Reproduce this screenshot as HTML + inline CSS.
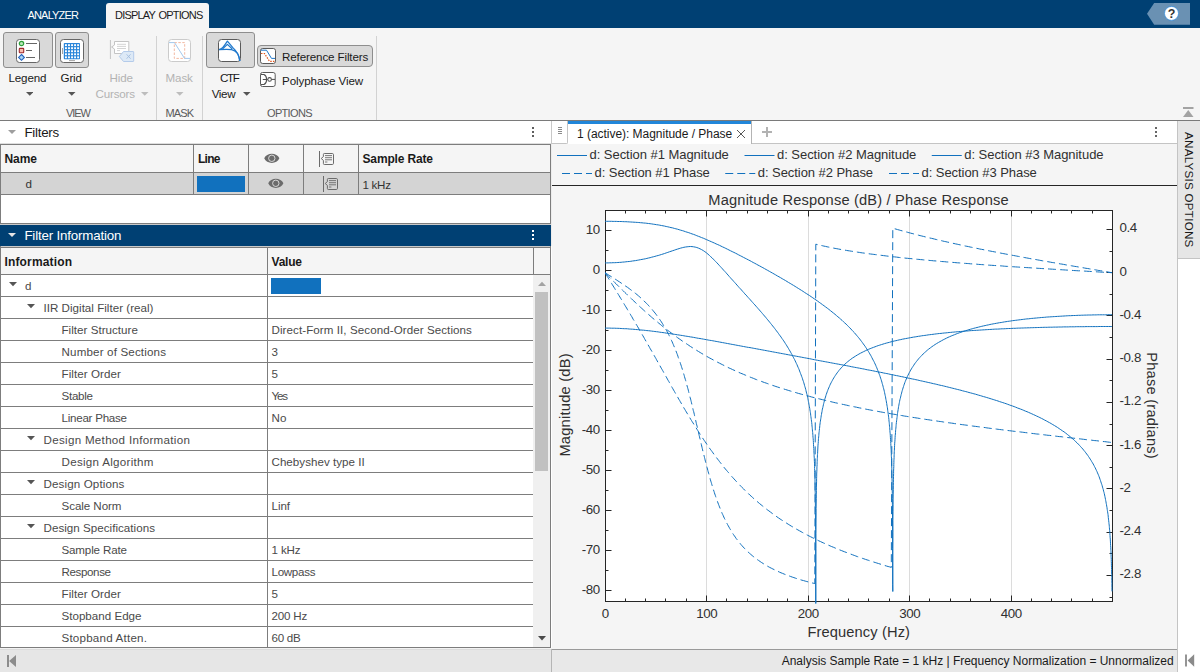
<!DOCTYPE html>
<html><head><meta charset="utf-8"><title>Filter Analyzer</title>
<style>
html,body{margin:0;padding:0;}
body{width:1200px;height:672px;position:relative;overflow:hidden;background:#f5f5f5;font-family:"Liberation Sans", sans-serif;}
body>div,body>svg{position:absolute;}
.t{font-family:"Liberation Sans", sans-serif;}
</style></head><body>
<div style="left:0px;top:0px;width:1200px;height:28px;background:#004073;"></div>
<div style="left:106px;top:3px;width:103px;height:26px;background:#f5f5f5;border-radius:3px 3px 0 0;"></div>
<div class="t" style="left:27.50px;top:8.00px;font-size:11px;line-height:14px;color:#ffffff;letter-spacing:-0.830px;white-space:nowrap;">ANALYZER</div>
<div class="t" style="left:115.00px;top:8.00px;font-size:11px;line-height:14px;color:#1a1a1a;letter-spacing:-0.794px;white-space:nowrap;word-spacing:1.4px;">DISPLAY OPTIONS</div>
<svg style="left:1140px;top:0;" width="60" height="28" viewBox="0 0 60 28"><path d="M7 13.8 L14.2 3 H50 V24.7 H14.2 Z" fill="#6a91b3"/><circle cx="31.5" cy="13.4" r="7" fill="#fff" stroke="#2a8ae0" stroke-width="0.7"/></svg>
<div class="t" style="left:1161.5px;top:6px;width:20px;text-align:center;font-size:12.5px;line-height:16px;font-weight:bold;color:#333;">?</div>
<div style="left:0px;top:28px;width:1200px;height:92px;background:#f5f5f5;"></div>
<div style="left:0px;top:120px;width:1200px;height:1px;background:#7a7a7a;"></div>
<div style="left:156px;top:36px;width:1px;height:84px;background:#d2d2d2;"></div>
<div style="left:202px;top:36px;width:1px;height:84px;background:#d2d2d2;"></div>
<div style="left:376px;top:36px;width:1px;height:84px;background:#d2d2d2;"></div>
<div style="left:3px;top:32px;width:50px;height:36px;background:#d9d9d9;border:1px solid #8e8e8e;border-radius:3px;box-sizing:border-box;"></div>
<div style="left:55px;top:32px;width:34px;height:36px;background:#d9d9d9;border:1px solid #8e8e8e;border-radius:3px;box-sizing:border-box;"></div>
<div style="left:206px;top:32px;width:49px;height:36px;background:#d9d9d9;border:1px solid #8e8e8e;border-radius:3px;box-sizing:border-box;"></div>
<div style="left:257px;top:45px;width:116px;height:22px;background:#d9d9d9;border:1px solid #8e8e8e;border-radius:4px;box-sizing:border-box;"></div>
<div class="t" style="left:8.50px;top:71.00px;font-size:11.6px;line-height:14px;color:#1a1a1a;letter-spacing:-0.149px;white-space:nowrap;">Legend</div>
<div class="t" style="left:60.50px;top:71.00px;font-size:11.6px;line-height:14px;color:#1a1a1a;letter-spacing:-0.141px;white-space:nowrap;">Grid</div>
<div class="t" style="left:109.50px;top:71.00px;font-size:11.6px;line-height:14px;color:#b3b3b3;letter-spacing:-0.132px;white-space:nowrap;">Hide</div>
<div class="t" style="left:95.50px;top:87.00px;font-size:11.6px;line-height:14px;color:#b3b3b3;letter-spacing:-0.183px;white-space:nowrap;">Cursors</div>
<div class="t" style="left:165.50px;top:71.00px;font-size:11.6px;line-height:14px;color:#b3b3b3;letter-spacing:-0.113px;white-space:nowrap;">Mask</div>
<div class="t" style="left:220.00px;top:71.00px;font-size:11.6px;line-height:14px;color:#1a1a1a;letter-spacing:-1.402px;white-space:nowrap;">CTF</div>
<div class="t" style="left:211.70px;top:87.00px;font-size:11.6px;line-height:14px;color:#1a1a1a;letter-spacing:-0.352px;white-space:nowrap;">View</div>
<div class="t" style="left:282.00px;top:50.00px;font-size:11.6px;line-height:14px;color:#1a1a1a;letter-spacing:-0.124px;white-space:nowrap;">Reference Filters</div>
<div class="t" style="left:282.00px;top:74.00px;font-size:11.6px;line-height:14px;color:#1a1a1a;letter-spacing:-0.082px;white-space:nowrap;">Polyphase View</div>
<div class="t" style="left:66.00px;top:106.00px;font-size:11px;line-height:14px;color:#5a5a5a;letter-spacing:-1.053px;white-space:nowrap;">VIEW</div>
<div class="t" style="left:165.50px;top:106.00px;font-size:11px;line-height:14px;color:#5a5a5a;letter-spacing:-0.877px;white-space:nowrap;">MASK</div>
<div class="t" style="left:267.00px;top:106.00px;font-size:11px;line-height:14px;color:#5a5a5a;letter-spacing:-0.667px;white-space:nowrap;">OPTIONS</div>
<svg style="left:25.5px;top:92.3px;" width="7.5" height="3.8" viewBox="0 0 7.5 3.8"><path d="M0 0 H7.5 L3.75 3.8 Z" fill="#555"/></svg>
<svg style="left:68.2px;top:92.3px;" width="7.5" height="3.8" viewBox="0 0 7.5 3.8"><path d="M0 0 H7.5 L3.75 3.8 Z" fill="#555"/></svg>
<svg style="left:141px;top:92.3px;" width="7.5" height="3.8" viewBox="0 0 7.5 3.8"><path d="M0 0 H7.5 L3.75 3.8 Z" fill="#bdbdbd"/></svg>
<svg style="left:176.2px;top:92.3px;" width="7.5" height="3.8" viewBox="0 0 7.5 3.8"><path d="M0 0 H7.5 L3.75 3.8 Z" fill="#bdbdbd"/></svg>
<svg style="left:243.3px;top:92.3px;" width="7.5" height="3.8" viewBox="0 0 7.5 3.8"><path d="M0 0 H7.5 L3.75 3.8 Z" fill="#555"/></svg>
<svg style="left:16px;top:39px;" width="24" height="24" viewBox="0 0 24 24"><rect x="0.5" y="0.5" width="23" height="23" rx="3" fill="#fff" stroke="#666"/><circle cx="5.5" cy="4.5" r="2.2" fill="#b9e8b9" stroke="#2e9e3a" stroke-width="1.2"/><rect x="3.3" y="9.4" width="4.4" height="4.4" rx="0.6" fill="#f7bfb0" stroke="#a12a2e" stroke-width="1.1"/><path d="M5.5 15.5 L8.4 18.4 L5.5 21.3 L2.6 18.4 Z" fill="#a9d6f5" stroke="#2160bd" stroke-width="1.1"/><path d="M10 4.5 H21 M10 11.5 H16 M10 18.5 H19" stroke="#666" stroke-width="1"/></svg>
<svg style="left:60px;top:39px;" width="24" height="24" viewBox="0 0 24 24"><rect x="0.5" y="0.5" width="23" height="23" rx="3" fill="#fff" stroke="#666"/><rect x="3.8" y="4" width="16.2" height="16.2" rx="0.8" fill="#2a86da"/><rect x="5.00" y="5.20" width="1.9" height="1.9" fill="#fff"/><rect x="5.00" y="8.24" width="1.9" height="1.9" fill="#fff"/><rect x="5.00" y="11.28" width="1.9" height="1.9" fill="#fff"/><rect x="5.00" y="14.32" width="1.9" height="1.9" fill="#fff"/><rect x="5.00" y="17.36" width="1.9" height="1.9" fill="#fff"/><rect x="8.04" y="5.20" width="1.9" height="1.9" fill="#fff"/><rect x="8.04" y="8.24" width="1.9" height="1.9" fill="#fff"/><rect x="8.04" y="11.28" width="1.9" height="1.9" fill="#fff"/><rect x="8.04" y="14.32" width="1.9" height="1.9" fill="#fff"/><rect x="8.04" y="17.36" width="1.9" height="1.9" fill="#fff"/><rect x="11.08" y="5.20" width="1.9" height="1.9" fill="#fff"/><rect x="11.08" y="8.24" width="1.9" height="1.9" fill="#fff"/><rect x="11.08" y="11.28" width="1.9" height="1.9" fill="#fff"/><rect x="11.08" y="14.32" width="1.9" height="1.9" fill="#fff"/><rect x="11.08" y="17.36" width="1.9" height="1.9" fill="#fff"/><rect x="14.12" y="5.20" width="1.9" height="1.9" fill="#fff"/><rect x="14.12" y="8.24" width="1.9" height="1.9" fill="#fff"/><rect x="14.12" y="11.28" width="1.9" height="1.9" fill="#fff"/><rect x="14.12" y="14.32" width="1.9" height="1.9" fill="#fff"/><rect x="14.12" y="17.36" width="1.9" height="1.9" fill="#fff"/><rect x="17.16" y="5.20" width="1.9" height="1.9" fill="#fff"/><rect x="17.16" y="8.24" width="1.9" height="1.9" fill="#fff"/><rect x="17.16" y="11.28" width="1.9" height="1.9" fill="#fff"/><rect x="17.16" y="14.32" width="1.9" height="1.9" fill="#fff"/><rect x="17.16" y="17.36" width="1.9" height="1.9" fill="#fff"/><path d="M2.5 9 V15" stroke="#9a9a9a" stroke-width="0.9"/><path d="M9 21.6 H15" stroke="#9a9a9a" stroke-width="0.9"/></svg>
<svg style="left:108px;top:39px;" width="28" height="24" viewBox="0 0 28 24"><path d="M2.4 1 V20" stroke="#c4c4c4" stroke-width="1"/><path d="M6.5 2.5 H20.8 V14.5 H6.5 V10 L3.6 8 L6.5 6 Z" fill="#fff" stroke="#c4c4c4" stroke-width="1"/><path d="M9 5.3 H18 M9 7.4 H18 M9 9.5 H18 M9 11.6 H12" stroke="#cfcfcf" stroke-width="0.9"/><path d="M11.4 17.5 L15.5 12.5 H25.2 Q25.7 12.5 25.7 13 V22 Q25.7 22.5 25.2 22.5 H15.5 Z" fill="#dde9f6" stroke="#b4cbea" stroke-width="1"/><path d="M18.6 15.3 L22.6 19.7 M22.6 15.3 L18.6 19.7" stroke="#a3bde0" stroke-width="0.9"/></svg>
<svg style="left:168px;top:39px;" width="23" height="23" viewBox="0 0 23 23"><rect x="0.5" y="0.5" width="22" height="22" rx="3" fill="#fff" stroke="#cbcbcb"/><rect x="6.3" y="3.6" width="10.4" height="15.8" fill="none" stroke="#f2b9a3" stroke-width="1" stroke-dasharray="2.5 1.5"/><path d="M1 3.6 H6.5 L16.5 19.4 H22" fill="none" stroke="#a3c8ec" stroke-width="1"/></svg>
<svg style="left:218px;top:39px;" width="23" height="23" viewBox="0 0 23 23"><rect x="0.5" y="0.5" width="22" height="22" rx="3" fill="#fff" stroke="#5a5a5a"/><g fill="none" stroke="#1f78cc" stroke-width="1.25" stroke-linejoin="round"><path d="M1 10.6 C4 10.2 5.5 8 9.4 2.2 L14.6 8.4 C18 11.5 21 15 21.8 22"/><path d="M1 10.6 C7 10.3 11 10.3 13.5 10.6 C18.5 11.5 21.2 16 21.8 22"/><path d="M4.4 10 L9.4 5.4 L14.3 10"/></g></svg>
<svg style="left:260px;top:48px;" width="16" height="16" viewBox="0 0 16 16"><rect x="0.5" y="0.5" width="15" height="15" rx="2.2" fill="#fff" stroke="#5a5a5a"/><path d="M1 2.2 H6.5 L11.5 10.4 H15" fill="none" stroke="#1f78cc" stroke-width="1"/><path d="M1 5.5 H4.5 L9.5 13.3 H14.5" fill="none" stroke="#e0541b" stroke-width="1.15" stroke-dasharray="1.5 1.2"/></svg>
<svg style="left:260px;top:72px;" width="16" height="15" viewBox="0 0 16 15"><rect x="0.5" y="0.5" width="14.7" height="14" rx="2" fill="#fff" stroke="#5a5a5a"/><g fill="none" stroke="#505050" stroke-width="1.05"><path d="M1 2.4 H4 Q6.6 3.6 6.6 7.4 Q6.6 11.2 4 12.4 H1 M2.8 7.4 H7.8"/><circle cx="9.6" cy="7.4" r="1.8"/><path d="M11.4 7.4 H15"/></g></svg>
<div style="left:0px;top:121px;width:551px;height:24px;background:#fff;"></div>
<svg style="left:8px;top:130px;" width="9" height="5" viewBox="0 0 9 5"><path d="M0 0 H8 L4 4 Z" fill="#9e9e9e"/></svg>
<div class="t" style="left:24.50px;top:124.00px;font-size:13.33px;line-height:17px;color:#1a1a1a;letter-spacing:-0.276px;white-space:nowrap;">Filters</div>
<div style="left:532px;top:127px;width:2px;height:2px;background:#5e5e5e;"></div>
<div style="left:532px;top:131px;width:2px;height:2px;background:#5e5e5e;"></div>
<div style="left:532px;top:135px;width:2px;height:2px;background:#5e5e5e;"></div>
<div style="left:0px;top:144px;width:552px;height:81px;background:#fff;"></div>
<div style="left:0px;top:143px;width:551px;height:1px;background:#dedede;"></div>
<div style="left:0px;top:144px;width:551px;height:1px;background:#7d7d7d;"></div>
<div style="left:1px;top:145px;width:550px;height:27px;background:#f5f5f5;"></div>
<div style="left:0px;top:172px;width:551px;height:1px;background:#7d7d7d;"></div>
<div style="left:1px;top:173px;width:550px;height:21px;background:#d4d4d4;"></div>
<div style="left:0px;top:194px;width:551px;height:1px;background:#7d7d7d;"></div>
<div style="left:0px;top:144px;width:1px;height:81px;background:#7d7d7d;"></div>
<div style="left:550px;top:144px;width:1px;height:80px;background:#7d7d7d;"></div>
<div style="left:551px;top:121px;width:1px;height:23px;background:#c8c8c8;"></div>
<div style="left:551px;top:144px;width:1px;height:505px;background:#ececec;"></div>
<div style="left:0px;top:223px;width:551px;height:1px;background:#7d7d7d;"></div>
<div style="left:0px;top:224px;width:551px;height:1px;background:#c9c9c9;"></div>
<div style="left:193px;top:145px;width:1px;height:49px;background:#7d7d7d;"></div>
<div style="left:248px;top:145px;width:1px;height:49px;background:#7d7d7d;"></div>
<div style="left:303px;top:145px;width:1px;height:49px;background:#7d7d7d;"></div>
<div style="left:358px;top:145px;width:1px;height:49px;background:#7d7d7d;"></div>
<div class="t" style="left:4.50px;top:151.00px;font-size:12px;line-height:16px;color:#1a1a1a;letter-spacing:-0.047px;white-space:nowrap;font-weight:bold;">Name</div>
<div class="t" style="left:198.00px;top:151.00px;font-size:12px;line-height:16px;color:#1a1a1a;letter-spacing:-0.740px;white-space:nowrap;font-weight:bold;">Line</div>
<div class="t" style="left:362.50px;top:151.00px;font-size:12px;line-height:16px;color:#1a1a1a;letter-spacing:-0.150px;white-space:nowrap;font-weight:bold;">Sample Rate</div>
<div class="t" style="left:25.50px;top:177.00px;font-size:11.6px;line-height:14px;color:#333;letter-spacing:0.000px;white-space:nowrap;">d</div>
<div class="t" style="left:362.50px;top:178.00px;font-size:11.6px;line-height:14px;color:#333;letter-spacing:-0.299px;white-space:nowrap;">1 kHz</div>
<div style="left:197px;top:176px;width:48px;height:16px;background:#1171BE;"></div>
<svg style="left:264px;top:153px;" width="16" height="11" viewBox="0 0 16 11"><path d="M0.2 5.3 C2.6 -0.9 13 -0.9 15.4 5.3 C13 11.5 2.6 11.5 0.2 5.3 Z" fill="#6b6b6b"/><circle cx="7.8" cy="5.3" r="3.2" fill="none" stroke="#f0f0f0" stroke-width="0.8"/></svg>
<svg style="left:268px;top:178px;" width="16" height="11" viewBox="0 0 16 11"><path d="M0.2 5.3 C2.6 -0.9 13 -0.9 15.4 5.3 C13 11.5 2.6 11.5 0.2 5.3 Z" fill="#6b6b6b"/><circle cx="7.8" cy="5.3" r="3.2" fill="none" stroke="#f0f0f0" stroke-width="0.8"/></svg>
<svg style="left:318px;top:151px;" width="17" height="17" viewBox="0 0 17 17"><g fill="none" stroke="#6b6b6b"><path d="M1.5 0 V16" stroke-width="1"/><path d="M6.3 2.5 H14.3 Q15.5 2.5 15.5 3.7 V12.3 Q15.5 13.5 14.3 13.5 H6.3 Q5.4 13.5 5.4 12.6 V9.4 L3.2 7.5 L5.4 5.6 V3.4 Q5.4 2.5 6.3 2.5 Z" stroke-width="1"/><path d="M7 4.6 H14 M7 6.7 H14 M7 8.8 H14 M7 11 H9.4" stroke-width="0.9"/></g></svg>
<svg style="left:322px;top:176px;" width="17" height="17" viewBox="0 0 17 17"><g fill="none" stroke="#6b6b6b"><path d="M1.5 0 V16" stroke-width="1"/><path d="M6.3 2.5 H14.3 Q15.5 2.5 15.5 3.7 V12.3 Q15.5 13.5 14.3 13.5 H6.3 Q5.4 13.5 5.4 12.6 V9.4 L3.2 7.5 L5.4 5.6 V3.4 Q5.4 2.5 6.3 2.5 Z" stroke-width="1"/><path d="M7 4.6 H14 M7 6.7 H14 M7 8.8 H14 M7 11 H9.4" stroke-width="0.9"/></g></svg>
<div style="left:0px;top:225px;width:551px;height:21px;background:#004073;"></div>
<svg style="left:8px;top:233px;" width="9" height="5" viewBox="0 0 9 5"><path d="M0 0 H8 L4 4 Z" fill="#e6e6e6"/></svg>
<div class="t" style="left:24.40px;top:227.00px;font-size:13.33px;line-height:17px;color:#ffffff;letter-spacing:-0.175px;white-space:nowrap;">Filter Information</div>
<div style="left:532px;top:230px;width:2px;height:2px;background:#ffffff;"></div>
<div style="left:532px;top:234px;width:2px;height:2px;background:#ffffff;"></div>
<div style="left:532px;top:238px;width:2px;height:2px;background:#ffffff;"></div>
<div style="left:0px;top:246px;width:552px;height:402px;background:#fff;"></div>
<div style="left:0px;top:246px;width:551px;height:1px;background:#c9c9c9;"></div>
<div style="left:0px;top:247px;width:551px;height:1px;background:#7d7d7d;"></div>
<div style="left:1px;top:248px;width:550px;height:26px;background:#f5f5f5;"></div>
<div style="left:0px;top:246px;width:1px;height:402px;background:#7d7d7d;"></div>
<div style="left:550px;top:246px;width:1px;height:402px;background:#7d7d7d;"></div>
<div style="left:0px;top:647px;width:551px;height:1px;background:#7d7d7d;"></div>
<div style="left:533px;top:248px;width:1px;height:26px;background:#7d7d7d;"></div>
<div style="left:533px;top:275px;width:17px;height:372px;background:#f0f0f0;"></div>
<div style="left:535px;top:292px;width:13px;height:179px;background:#c1c1c1;"></div>
<svg style="left:538px;top:281px;" width="8" height="5" viewBox="0 0 8 5"><path d="M0 5 H8 L4 0.8 Z" fill="#a3a3a3"/></svg>
<svg style="left:538px;top:636px;" width="8" height="5" viewBox="0 0 8 5"><path d="M0 0 H8 L4 4.5 Z" fill="#4a4a4a"/></svg>
<div style="left:0px;top:274px;width:551px;height:1px;background:#7d7d7d;"></div>
<div style="left:0px;top:296px;width:533px;height:1px;background:#7d7d7d;"></div>
<div style="left:0px;top:318px;width:533px;height:1px;background:#7d7d7d;"></div>
<div style="left:0px;top:340px;width:533px;height:1px;background:#7d7d7d;"></div>
<div style="left:0px;top:362px;width:533px;height:1px;background:#7d7d7d;"></div>
<div style="left:0px;top:384px;width:533px;height:1px;background:#7d7d7d;"></div>
<div style="left:0px;top:406px;width:533px;height:1px;background:#7d7d7d;"></div>
<div style="left:0px;top:428px;width:533px;height:1px;background:#7d7d7d;"></div>
<div style="left:0px;top:450px;width:533px;height:1px;background:#7d7d7d;"></div>
<div style="left:0px;top:472px;width:533px;height:1px;background:#7d7d7d;"></div>
<div style="left:0px;top:494px;width:533px;height:1px;background:#7d7d7d;"></div>
<div style="left:0px;top:516px;width:533px;height:1px;background:#7d7d7d;"></div>
<div style="left:0px;top:538px;width:533px;height:1px;background:#7d7d7d;"></div>
<div style="left:0px;top:560px;width:533px;height:1px;background:#7d7d7d;"></div>
<div style="left:0px;top:582px;width:533px;height:1px;background:#7d7d7d;"></div>
<div style="left:0px;top:604px;width:533px;height:1px;background:#7d7d7d;"></div>
<div style="left:0px;top:626px;width:533px;height:1px;background:#7d7d7d;"></div>
<div style="left:267px;top:248px;width:1px;height:399px;background:#7d7d7d;"></div>
<div class="t" style="left:4.50px;top:254.00px;font-size:12px;line-height:16px;color:#1a1a1a;letter-spacing:0.150px;white-space:nowrap;font-weight:bold;">Information</div>
<div class="t" style="left:271.50px;top:254.00px;font-size:12px;line-height:16px;color:#1a1a1a;letter-spacing:-0.205px;white-space:nowrap;font-weight:bold;">Value</div>
<div class="t" style="left:25.00px;top:279.00px;font-size:11.6px;line-height:14px;color:#4a4a4a;letter-spacing:0.000px;white-space:nowrap;">d</div>
<svg style="left:9px;top:282.3px;" width="8" height="5" viewBox="0 0 8 5"><path d="M0 0 H8 L4 4.2 Z" fill="#555"/></svg>
<div class="t" style="left:43.50px;top:301.00px;font-size:11.6px;line-height:14px;color:#4a4a4a;letter-spacing:0.016px;white-space:nowrap;">IIR Digital Filter (real)</div>
<svg style="left:27px;top:304.3px;" width="8" height="5" viewBox="0 0 8 5"><path d="M0 0 H8 L4 4.2 Z" fill="#555"/></svg>
<div class="t" style="left:61.50px;top:323.00px;font-size:11.6px;line-height:14px;color:#4a4a4a;letter-spacing:0.027px;white-space:nowrap;">Filter Structure</div>
<div class="t" style="left:271.50px;top:323.00px;font-size:11.6px;line-height:14px;color:#4a4a4a;letter-spacing:0.072px;white-space:nowrap;">Direct-Form II, Second-Order Sections</div>
<div class="t" style="left:61.50px;top:345.00px;font-size:11.6px;line-height:14px;color:#4a4a4a;letter-spacing:0.156px;white-space:nowrap;">Number of Sections</div>
<div class="t" style="left:271.50px;top:345.00px;font-size:11.6px;line-height:14px;color:#4a4a4a;letter-spacing:0.000px;white-space:nowrap;">3</div>
<div class="t" style="left:61.50px;top:367.00px;font-size:11.6px;line-height:14px;color:#4a4a4a;letter-spacing:0.073px;white-space:nowrap;">Filter Order</div>
<div class="t" style="left:271.50px;top:367.00px;font-size:11.6px;line-height:14px;color:#4a4a4a;letter-spacing:0.000px;white-space:nowrap;">5</div>
<div class="t" style="left:61.50px;top:389.00px;font-size:11.6px;line-height:14px;color:#4a4a4a;letter-spacing:-0.289px;white-space:nowrap;">Stable</div>
<div class="t" style="left:271.50px;top:389.00px;font-size:11.6px;line-height:14px;color:#4a4a4a;letter-spacing:-1.204px;white-space:nowrap;">Yes</div>
<div class="t" style="left:61.50px;top:411.00px;font-size:11.6px;line-height:14px;color:#4a4a4a;letter-spacing:-0.257px;white-space:nowrap;">Linear Phase</div>
<div class="t" style="left:271.50px;top:411.00px;font-size:11.6px;line-height:14px;color:#4a4a4a;letter-spacing:0.152px;white-space:nowrap;">No</div>
<div class="t" style="left:43.50px;top:433.00px;font-size:11.6px;line-height:14px;color:#4a4a4a;letter-spacing:0.299px;white-space:nowrap;">Design Method Information</div>
<svg style="left:27px;top:436.3px;" width="8" height="5" viewBox="0 0 8 5"><path d="M0 0 H8 L4 4.2 Z" fill="#555"/></svg>
<div class="t" style="left:61.50px;top:455.00px;font-size:11.6px;line-height:14px;color:#4a4a4a;letter-spacing:0.287px;white-space:nowrap;">Design Algorithm</div>
<div class="t" style="left:271.50px;top:455.00px;font-size:11.6px;line-height:14px;color:#4a4a4a;letter-spacing:0.025px;white-space:nowrap;">Chebyshev type II</div>
<div class="t" style="left:43.50px;top:477.00px;font-size:11.6px;line-height:14px;color:#4a4a4a;letter-spacing:0.127px;white-space:nowrap;">Design Options</div>
<svg style="left:27px;top:480.3px;" width="8" height="5" viewBox="0 0 8 5"><path d="M0 0 H8 L4 4.2 Z" fill="#555"/></svg>
<div class="t" style="left:61.50px;top:499.00px;font-size:11.6px;line-height:14px;color:#4a4a4a;letter-spacing:-0.061px;white-space:nowrap;">Scale Norm</div>
<div class="t" style="left:271.50px;top:499.00px;font-size:11.6px;line-height:14px;color:#4a4a4a;letter-spacing:-0.059px;white-space:nowrap;">Linf</div>
<div class="t" style="left:43.50px;top:521.00px;font-size:11.6px;line-height:14px;color:#4a4a4a;letter-spacing:0.030px;white-space:nowrap;">Design Specifications</div>
<svg style="left:27px;top:524.3px;" width="8" height="5" viewBox="0 0 8 5"><path d="M0 0 H8 L4 4.2 Z" fill="#555"/></svg>
<div class="t" style="left:61.50px;top:543.00px;font-size:11.6px;line-height:14px;color:#4a4a4a;letter-spacing:-0.155px;white-space:nowrap;">Sample Rate</div>
<div class="t" style="left:271.50px;top:543.00px;font-size:11.6px;line-height:14px;color:#4a4a4a;letter-spacing:-0.124px;white-space:nowrap;">1 kHz</div>
<div class="t" style="left:61.50px;top:565.00px;font-size:11.6px;line-height:14px;color:#4a4a4a;letter-spacing:-0.386px;white-space:nowrap;">Response</div>
<div class="t" style="left:271.50px;top:565.00px;font-size:11.6px;line-height:14px;color:#4a4a4a;letter-spacing:-0.303px;white-space:nowrap;">Lowpass</div>
<div class="t" style="left:61.50px;top:587.00px;font-size:11.6px;line-height:14px;color:#4a4a4a;letter-spacing:0.073px;white-space:nowrap;">Filter Order</div>
<div class="t" style="left:271.50px;top:587.00px;font-size:11.6px;line-height:14px;color:#4a4a4a;letter-spacing:0.000px;white-space:nowrap;">5</div>
<div class="t" style="left:61.50px;top:609.00px;font-size:11.6px;line-height:14px;color:#4a4a4a;letter-spacing:0.006px;white-space:nowrap;">Stopband Edge</div>
<div class="t" style="left:271.50px;top:609.00px;font-size:11.6px;line-height:14px;color:#4a4a4a;letter-spacing:-0.194px;white-space:nowrap;">200 Hz</div>
<div class="t" style="left:61.50px;top:631.00px;font-size:11.6px;line-height:14px;color:#4a4a4a;letter-spacing:0.208px;white-space:nowrap;">Stopband Atten.</div>
<div class="t" style="left:271.50px;top:631.00px;font-size:11.6px;line-height:14px;color:#4a4a4a;letter-spacing:-0.269px;white-space:nowrap;">60 dB</div>
<div style="left:271px;top:278px;width:50px;height:16px;background:#1171BE;"></div>
<div style="left:0px;top:648px;width:552px;height:24px;background:#e6e6e6;"></div>
<div style="left:0px;top:648px;width:552px;height:1px;background:#f2f2f2;"></div>
<svg style="left:6px;top:654px;" width="11" height="14" viewBox="0 0 11 14"><rect x="1" y="1" width="2" height="12" fill="#8c8c8c"/><path d="M10 1 V13 L3.1 7 Z" fill="#8c8c8c"/></svg>
<div style="left:0px;top:649px;width:551px;height:1px;background:#dcdcdc;"></div>
<div style="left:551px;top:649px;width:1px;height:23px;background:#b5b5b5;"></div>
<div style="left:552px;top:121px;width:625px;height:23px;background:#fff;"></div>
<div style="left:752px;top:143px;width:425px;height:1px;background:#c4c4c4;"></div>
<div style="left:552px;top:144px;width:625px;height:505px;background:#f5f5f5;"></div>
<div style="left:552px;top:121px;width:16px;height:23px;background:#fff;border-right:1px solid #c4c4c4;border-bottom:1px solid #c4c4c4;border-radius:0 0 2px 0;box-sizing:border-box;"></div>
<div style="left:558px;top:127px;width:4px;height:1px;background:#8a8a8a;"></div>
<div style="left:558px;top:129px;width:4px;height:1px;background:#8a8a8a;"></div>
<div style="left:558px;top:131px;width:4px;height:1px;background:#8a8a8a;"></div>
<div style="left:558px;top:133px;width:4px;height:1px;background:#8a8a8a;"></div>
<div style="left:568px;top:121px;width:184px;height:23px;background:#fff;border-right:1px solid #b4b4b4;box-sizing:border-box;"></div>
<div style="left:568px;top:121px;width:183px;height:3px;background:#2186d9;"></div>
<div class="t" style="left:577.00px;top:126.00px;font-size:12.001px;line-height:16px;color:#1a1a1a;letter-spacing:-0.033px;white-space:nowrap;">1 (active): Magnitude / Phase</div>
<svg style="left:736px;top:129px;" width="10" height="10" viewBox="0 0 10 10"><path d="M1 1 L9 9 M9 1 L1 9" stroke="#444" stroke-width="0.9" fill="none"/></svg>
<svg style="left:761px;top:126px;" width="12" height="12" viewBox="0 0 12 12"><path d="M6 1 V11 M1 6 H11" stroke="#b2b2b2" stroke-width="2" fill="none"/></svg>
<div style="left:1155px;top:127px;width:2px;height:2px;background:#666;"></div>
<div style="left:1155px;top:131px;width:2px;height:2px;background:#666;"></div>
<div style="left:1155px;top:135px;width:2px;height:2px;background:#666;"></div>
<div style="left:1177px;top:121px;width:1px;height:551px;background:#c4c4c4;"></div>
<div style="left:1178px;top:121px;width:22px;height:138px;background:#e6e6e6;"></div>
<div style="left:1178px;top:258px;width:22px;height:1px;background:#c4c4c4;"></div>
<div style="left:1178px;top:259px;width:22px;height:413px;background:#fff;"></div>
<div class="t" style="left:1182px;top:132px;font-size:11.5px;line-height:14px;color:#1a1a1a;writing-mode:vertical-rl;white-space:nowrap;letter-spacing:0.33px;">ANALYSIS OPTIONS</div>
<svg style="left:1183px;top:106px;" width="11" height="11" viewBox="0 0 11 11"><rect x="0" y="1" width="10.5" height="2" fill="#a3a3a3"/><path d="M0 11 H10.5 L5.25 4 Z" fill="#a3a3a3"/></svg>
<svg style="left:1184px;top:654px;" width="11" height="13" viewBox="0 0 11 13"><path d="M2 0.5 V12.5" stroke="#8a8a8a" stroke-width="1.8" fill="none"/><path d="M10.2 0.3 V12.7 L3.6 6.5 Z" fill="#8a8a8a"/></svg>
<div style="left:552px;top:649px;width:625px;height:1px;background:#9a9a9a;"></div>
<div style="left:552px;top:650px;width:625px;height:22px;background:#e8e8e8;"></div>
<div class="t" style="left:781.70px;top:653.00px;font-size:12.001px;line-height:16px;color:#1a1a1a;letter-spacing:-0.010px;white-space:nowrap;">Analysis Sample Rate = 1 kHz | Frequency Normalization = Unnormalized</div>
<svg style="left:0;top:0;" width="1200" height="672" viewBox="0 0 1200 672">
<defs><clipPath id="cp"><rect x="605.0" y="210.0" width="508.0" height="393.5"/></clipPath></defs>
<rect x="605.5" y="210.5" width="507.0" height="391.0" fill="#fff"/>
<path d="M706.5 210.5 V601.5" stroke="#dcdcdc" stroke-width="1"/>
<path d="M808.5 210.5 V601.5" stroke="#dcdcdc" stroke-width="1"/>
<path d="M909.5 210.5 V601.5" stroke="#dcdcdc" stroke-width="1"/>
<path d="M1011.5 210.5 V601.5" stroke="#dcdcdc" stroke-width="1"/>
<rect x="605.5" y="210.5" width="507.0" height="391.0" fill="none" stroke="#262626" stroke-width="1"/>
<path d="M605.5 601.5 v-6 M605.5 210.5 v6 M625.5 601.5 v-3 M625.5 210.5 v3 M645.5 601.5 v-3 M645.5 210.5 v3 M665.5 601.5 v-3 M665.5 210.5 v3 M686.5 601.5 v-3 M686.5 210.5 v3 M706.5 601.5 v-6 M706.5 210.5 v6 M726.5 601.5 v-3 M726.5 210.5 v3 M747.5 601.5 v-3 M747.5 210.5 v3 M767.5 601.5 v-3 M767.5 210.5 v3 M787.5 601.5 v-3 M787.5 210.5 v3 M808.5 601.5 v-6 M808.5 210.5 v6 M828.5 601.5 v-3 M828.5 210.5 v3 M848.5 601.5 v-3 M848.5 210.5 v3 M868.5 601.5 v-3 M868.5 210.5 v3 M889.5 601.5 v-3 M889.5 210.5 v3 M909.5 601.5 v-6 M909.5 210.5 v6 M929.5 601.5 v-3 M929.5 210.5 v3 M950.5 601.5 v-3 M950.5 210.5 v3 M970.5 601.5 v-3 M970.5 210.5 v3 M990.5 601.5 v-3 M990.5 210.5 v3 M1011.5 601.5 v-6 M1011.5 210.5 v6 M1031.5 601.5 v-3 M1031.5 210.5 v3 M1051.5 601.5 v-3 M1051.5 210.5 v3 M1071.5 601.5 v-3 M1071.5 210.5 v3 M1092.5 601.5 v-3 M1092.5 210.5 v3 M605.5 590.5 h6 M605.5 570.5 h3 M605.5 550.5 h6 M605.5 530.5 h3 M605.5 510.5 h6 M605.5 490.5 h3 M605.5 470.5 h6 M605.5 450.5 h3 M605.5 430.5 h6 M605.5 410.5 h3 M605.5 390.5 h6 M605.5 370.5 h3 M605.5 350.5 h6 M605.5 330.5 h3 M605.5 310.5 h6 M605.5 290.5 h3 M605.5 270.5 h6 M605.5 250.5 h3 M605.5 230.5 h6 M1112.5 597.5 h-3 M1112.5 575.5 h-6 M1112.5 553.5 h-3 M1112.5 532.5 h-6 M1112.5 510.5 h-3 M1112.5 488.5 h-6 M1112.5 467.5 h-3 M1112.5 445.5 h-6 M1112.5 424.5 h-3 M1112.5 402.5 h-6 M1112.5 380.5 h-3 M1112.5 359.5 h-6 M1112.5 337.5 h-3 M1112.5 315.5 h-6 M1112.5 294.5 h-3 M1112.5 272.5 h-6 M1112.5 251.5 h-3 M1112.5 229.5 h-6" stroke="#262626" stroke-width="1" fill="none"/>
<g clip-path="url(#cp)" fill="none" stroke="#1171BE" stroke-width="1" stroke-linejoin="round">
<path d="M605.0 221.3 L606.6 221.3 L608.2 221.3 L609.8 221.3 L611.4 221.3 L613.1 221.4 L614.7 221.4 L616.3 221.4 L617.9 221.5 L619.5 221.5 L621.1 221.5 L622.7 221.6 L624.3 221.7 L625.9 221.7 L627.6 221.8 L629.2 221.9 L630.8 222.0 L632.4 222.1 L634.0 222.2 L635.6 222.3 L637.2 222.4 L638.8 222.5 L640.4 222.7 L642.0 222.8 L643.7 223.0 L645.3 223.1 L646.9 223.3 L648.5 223.5 L650.1 223.7 L651.7 223.9 L653.3 224.2 L654.9 224.4 L656.5 224.7 L658.2 224.9 L659.8 225.2 L661.4 225.5 L663.0 225.8 L664.6 226.1 L666.2 226.5 L667.8 226.8 L669.4 227.2 L671.0 227.6 L672.7 227.9 L674.3 228.4 L675.9 228.8 L677.5 229.2 L679.1 229.7 L680.7 230.2 L682.3 230.6 L683.9 231.1 L685.5 231.7 L687.1 232.2 L688.8 232.7 L690.4 233.3 L692.0 233.9 L693.6 234.4 L695.2 235.0 L696.8 235.7 L698.4 236.3 L700.0 236.9 L701.6 237.6 L703.3 238.2 L704.9 238.9 L706.5 239.6 L708.1 240.3 L709.7 241.0 L711.3 241.7 L712.9 242.4 L714.5 243.1 L716.1 243.9 L717.8 244.6 L719.4 245.3 L721.0 246.1 L722.6 246.9 L724.2 247.6 L725.8 248.4 L727.4 249.2 L729.0 250.0 L730.6 250.8 L732.2 251.6 L733.9 252.4 L735.5 253.2 L737.1 254.0 L738.7 254.9 L740.3 255.7 L741.9 256.5 L743.5 257.4 L745.1 258.2 L746.7 259.0 L748.4 259.9 L750.0 260.7 L751.6 261.6 L753.2 262.5 L754.8 263.3 L756.4 264.2 L758.0 265.1 L759.6 265.9 L761.2 266.8 L762.9 267.7 L764.5 268.6 L766.1 269.5 L767.7 270.4 L769.3 271.3 L770.9 272.2 L772.5 273.1 L774.1 274.0 L775.7 274.9 L777.3 275.9 L779.0 276.8 L780.6 277.7 L782.2 278.7 L783.8 279.6 L785.4 280.5 L787.0 281.5 L788.6 282.5 L790.2 283.4 L791.8 284.4 L793.5 285.4 L795.1 286.4 L796.7 287.4 L798.3 288.4 L799.9 289.4 L801.5 290.4 L803.1 291.4 L804.7 292.5 L806.3 293.5 L808.0 294.6 L809.6 295.6 L811.2 296.7 L812.8 297.8 L814.4 298.9 L816.0 300.0 L817.6 301.1 L819.2 302.3 L820.8 303.4 L822.4 304.6 L824.1 305.8 L825.7 307.0 L827.3 308.2 L828.9 309.4 L830.4 310.6 L832.0 311.9 L833.5 313.1 L835.0 314.3 L836.5 315.6 L837.9 316.8 L839.4 318.0 L840.7 319.2 L842.1 320.4 L843.4 321.7 L844.7 322.9 L846.1 324.1 L847.3 325.3 L848.5 326.6 L849.8 327.8 L850.9 329.0 L852.1 330.3 L853.2 331.5 L854.4 332.7 L855.5 334.0 L856.5 335.2 L857.6 336.5 L858.6 337.7 L859.6 338.9 L860.5 340.1 L861.5 341.4 L862.4 342.6 L863.3 343.9 L864.2 345.1 L865.1 346.3 L865.9 347.6 L866.7 348.8 L867.5 350.1 L868.4 351.4 L869.1 352.6 L869.8 353.9 L870.6 355.2 L871.3 356.4 L871.9 357.7 L872.6 359.0 L873.2 360.2 L873.9 361.4 L874.5 362.7 L875.1 364.0 L875.7 365.2 L876.2 366.5 L876.8 367.8 L877.3 369.2 L877.8 370.4 L878.3 371.7 L878.8 373.0 L879.3 374.3 L879.8 375.6 L880.2 376.8 L880.6 378.1 L881.1 379.5 L881.5 380.9 L881.9 382.1 L882.2 383.4 L882.6 384.7 L883.0 386.1 L883.3 387.5 L883.7 388.8 L884.0 390.0 L884.3 391.3 L884.6 392.7 L884.9 394.1 L885.2 395.5 L885.5 396.8 L885.7 398.0 L885.9 399.3 L886.2 400.6 L886.4 402.0 L886.7 403.5 L886.9 405.0 L887.2 406.5 L887.4 407.8 L887.6 409.0 L887.7 410.3 L887.9 411.7 L888.1 413.1 L888.3 414.6 L888.5 416.1 L888.7 417.7 L888.9 419.3 L889.0 421.1 L889.2 422.3 L889.3 423.5 L889.4 424.8 L889.5 426.2 L889.7 427.6 L889.8 429.0 L889.9 430.6 L890.0 432.1 L890.2 433.8 L890.3 435.5 L890.4 437.4 L890.5 439.3 L890.7 441.3 L890.8 443.5 L890.9 445.8 L891.0 447.0 L891.0 448.2 L891.1 449.5 L891.2 450.9 L891.2 452.3 L891.3 453.7 L891.3 455.2 L891.4 456.8 L891.5 458.5 L891.5 460.2 L891.6 462.1 L891.6 464.0 L891.7 466.1 L891.8 468.2 L891.8 470.6 L891.9 473.1 L892.0 475.7 L892.0 478.6 L892.1 481.8 L892.1 485.3 L892.2 489.1 L892.3 493.4 L892.3 498.4 L892.4 504.2 L892.5 511.1 L892.5 519.7 L892.6 531.2 L892.6 548.5 L892.7 584.5 L892.8 591.5 L892.8 550.9 L892.9 532.7 L892.9 520.8 L893.0 511.9 L893.1 504.9 L893.1 499.1 L893.2 494.1 L893.3 489.7 L893.3 485.8 L893.4 482.4 L893.4 479.2 L893.5 476.3 L893.6 473.6 L893.6 471.1 L893.7 468.8 L893.8 466.7 L893.8 464.6 L893.9 462.7 L893.9 460.9 L894.0 459.1 L894.1 457.5 L894.1 455.9 L894.2 454.4 L894.2 453.0 L894.3 451.6 L894.4 450.3 L894.4 449.0 L894.5 447.8 L894.6 445.4 L894.7 443.2 L894.9 441.2 L895.0 439.3 L895.1 437.4 L895.2 435.7 L895.4 434.0 L895.5 432.5 L895.6 430.9 L895.7 429.5 L895.9 428.1 L896.0 426.8 L896.1 425.5 L896.2 424.3 L896.4 422.5 L896.6 420.8 L896.8 419.3 L897.0 417.7 L897.2 416.3 L897.3 414.9 L897.5 413.5 L897.7 412.3 L897.9 411.0 L898.2 409.4 L898.4 407.9 L898.6 406.5 L898.9 405.1 L899.1 403.8 L899.4 402.5 L899.6 401.3 L899.9 399.8 L900.3 398.4 L900.6 397.1 L900.9 395.8 L901.2 394.5 L901.6 393.1 L901.9 391.8 L902.3 390.4 L902.7 389.2 L903.0 388.0 L903.5 386.6 L903.9 385.3 L904.3 384.1 L904.8 382.7 L905.3 381.4 L905.8 380.2 L906.3 379.0 L906.9 377.7 L907.4 376.4 L908.1 375.1 L908.7 373.9 L909.3 372.6 L910.0 371.4 L910.7 370.1 L911.4 368.9 L912.2 367.6 L913.0 366.4 L913.8 365.2 L914.6 363.9 L915.6 362.6 L916.5 361.4 L917.5 360.2 L918.5 358.9 L919.6 357.7 L920.7 356.5 L921.9 355.3 L923.1 354.0 L924.4 352.8 L925.8 351.6 L927.2 350.3 L928.7 349.1 L930.3 347.9 L931.9 346.7 L933.5 345.6 L935.1 344.5 L936.7 343.5 L938.4 342.5 L940.0 341.6 L941.6 340.7 L943.2 339.8 L944.8 339.0 L946.4 338.2 L948.0 337.4 L949.6 336.7 L951.2 336.0 L952.9 335.3 L954.5 334.7 L956.1 334.0 L957.7 333.4 L959.3 332.8 L960.9 332.3 L962.5 331.7 L964.1 331.2 L965.7 330.7 L967.3 330.2 L969.0 329.7 L970.6 329.2 L972.2 328.8 L973.8 328.3 L975.4 327.9 L977.0 327.5 L978.6 327.1 L980.2 326.7 L981.8 326.3 L983.5 325.9 L985.1 325.6 L986.7 325.2 L988.3 324.9 L989.9 324.5 L991.5 324.2 L993.1 323.9 L994.7 323.6 L996.3 323.3 L998.0 323.0 L999.6 322.7 L1001.2 322.5 L1002.8 322.2 L1004.4 321.9 L1006.0 321.7 L1007.6 321.4 L1009.2 321.2 L1010.8 321.0 L1012.4 320.7 L1014.1 320.5 L1015.7 320.3 L1017.3 320.1 L1018.9 319.9 L1020.5 319.7 L1022.1 319.5 L1023.7 319.3 L1025.3 319.1 L1026.9 318.9 L1028.6 318.8 L1030.2 318.6 L1031.8 318.4 L1033.4 318.3 L1035.0 318.1 L1036.6 318.0 L1038.2 317.8 L1039.8 317.7 L1041.4 317.5 L1043.1 317.4 L1044.7 317.3 L1046.3 317.1 L1047.9 317.0 L1049.5 316.9 L1051.1 316.8 L1052.7 316.7 L1054.3 316.6 L1055.9 316.5 L1057.5 316.4 L1059.2 316.3 L1060.8 316.2 L1062.4 316.1 L1064.0 316.0 L1065.6 315.9 L1067.2 315.8 L1068.8 315.7 L1070.4 315.7 L1072.0 315.6 L1073.7 315.5 L1075.3 315.5 L1076.9 315.4 L1078.5 315.3 L1080.1 315.3 L1081.7 315.2 L1083.3 315.2 L1084.9 315.1 L1086.5 315.1 L1088.2 315.0 L1089.8 315.0 L1091.4 315.0 L1093.0 314.9 L1094.6 314.9 L1096.2 314.9 L1097.8 314.8 L1099.4 314.8 L1101.0 314.8 L1102.6 314.8 L1104.3 314.8 L1105.9 314.8 L1107.5 314.7 L1109.1 314.7 L1110.7 314.7 L1112.0 314.7"/>
<path d="M605.0 262.9 L606.6 262.9 L608.2 262.9 L609.8 262.8 L611.4 262.8 L613.1 262.7 L614.7 262.7 L616.3 262.6 L617.9 262.5 L619.5 262.4 L621.1 262.3 L622.7 262.1 L624.3 262.0 L625.9 261.8 L627.6 261.6 L629.2 261.5 L630.8 261.3 L632.4 261.0 L634.0 260.8 L635.6 260.6 L637.2 260.3 L638.8 260.0 L640.4 259.7 L642.0 259.4 L643.7 259.1 L645.3 258.8 L646.9 258.4 L648.5 258.0 L650.1 257.7 L651.7 257.2 L653.3 256.8 L654.9 256.4 L656.5 255.9 L658.2 255.5 L659.8 255.0 L661.4 254.5 L663.0 254.0 L664.6 253.5 L666.2 252.9 L667.8 252.4 L669.4 251.8 L671.0 251.3 L672.7 250.7 L674.3 250.2 L675.9 249.6 L677.5 249.1 L679.1 248.6 L680.7 248.1 L682.3 247.7 L683.9 247.3 L685.5 247.0 L687.1 246.8 L688.8 246.6 L690.4 246.5 L692.0 246.6 L693.6 246.8 L695.2 247.1 L696.8 247.5 L698.4 248.1 L700.0 248.8 L701.6 249.6 L703.3 250.6 L704.9 251.7 L706.5 252.9 L708.0 254.2 L709.4 255.4 L710.7 256.7 L712.1 257.9 L713.3 259.1 L714.5 260.4 L715.7 261.6 L716.9 262.8 L718.1 264.1 L719.2 265.3 L720.3 266.5 L721.4 267.7 L722.5 268.9 L723.6 270.2 L724.8 271.4 L725.9 272.6 L727.0 273.9 L728.1 275.1 L729.2 276.4 L730.3 277.6 L731.4 278.9 L732.6 280.1 L733.7 281.4 L734.8 282.6 L735.9 283.8 L737.0 285.1 L738.1 286.3 L739.2 287.6 L740.4 288.8 L741.5 290.0 L742.6 291.3 L743.7 292.5 L744.8 293.8 L745.9 295.0 L747.1 296.2 L748.2 297.5 L749.3 298.7 L750.4 299.9 L751.5 301.2 L752.6 302.4 L753.7 303.7 L754.9 304.9 L756.0 306.2 L757.1 307.4 L758.2 308.7 L759.3 309.9 L760.3 311.1 L761.4 312.3 L762.4 313.5 L763.5 314.8 L764.5 316.0 L765.6 317.2 L766.6 318.5 L767.7 319.8 L768.7 321.0 L769.7 322.2 L770.7 323.5 L771.7 324.7 L772.7 326.0 L773.7 327.2 L774.7 328.5 L775.6 329.7 L776.5 330.9 L777.5 332.2 L778.4 333.4 L779.3 334.7 L780.2 335.9 L781.1 337.1 L781.9 338.4 L782.8 339.6 L783.7 340.9 L784.5 342.1 L785.3 343.4 L786.1 344.6 L786.9 345.9 L787.6 347.1 L788.4 348.3 L789.1 349.6 L789.9 350.9 L790.6 352.2 L791.3 353.4 L792.0 354.6 L792.6 355.9 L793.3 357.2 L793.9 358.4 L794.6 359.6 L795.2 360.9 L795.8 362.2 L796.4 363.5 L797.0 364.7 L797.5 366.0 L798.1 367.3 L798.7 368.6 L799.2 369.8 L799.6 371.0 L800.1 372.3 L800.6 373.6 L801.1 374.9 L801.6 376.3 L802.1 377.5 L802.5 378.8 L802.9 380.1 L803.4 381.4 L803.8 382.8 L804.2 384.0 L804.5 385.3 L804.9 386.6 L805.3 387.9 L805.7 389.3 L806.0 390.7 L806.3 392.0 L806.6 393.2 L807.0 394.5 L807.3 395.9 L807.6 397.3 L807.9 398.7 L808.2 400.2 L808.4 401.5 L808.7 402.7 L808.9 404.1 L809.2 405.4 L809.4 406.8 L809.7 408.3 L809.9 409.8 L810.2 411.4 L810.4 412.7 L810.6 413.9 L810.7 415.3 L810.9 416.6 L811.1 418.1 L811.3 419.5 L811.5 421.1 L811.7 422.7 L811.9 424.3 L812.0 426.1 L812.2 427.3 L812.3 428.6 L812.4 429.9 L812.5 431.2 L812.7 432.6 L812.8 434.1 L812.9 435.6 L813.0 437.2 L813.2 438.8 L813.3 440.5 L813.4 442.4 L813.5 444.3 L813.6 446.3 L813.8 448.4 L813.9 450.7 L814.0 453.1 L814.1 454.4 L814.1 455.7 L814.2 457.1 L814.3 458.5 L814.3 460.0 L814.4 461.5 L814.5 463.2 L814.5 464.9 L814.6 466.7 L814.6 468.5 L814.7 470.5 L814.8 472.6 L814.8 474.9 L814.9 477.3 L815.0 479.8 L815.0 482.6 L815.1 485.6 L815.1 488.9 L815.2 492.5 L815.3 496.5 L815.3 501.1 L815.4 506.3 L815.4 512.5 L815.5 519.9 L815.6 529.5 L815.6 542.7 L815.7 564.1 L815.8 631.0 L815.8 576.2 L815.9 548.7 L815.9 533.6 L816.0 523.1 L816.1 515.0 L816.1 508.5 L816.2 503.0 L816.3 498.3 L816.3 494.1 L816.4 490.4 L816.4 487.1 L816.5 484.0 L816.6 481.2 L816.6 478.7 L816.7 476.2 L816.7 474.0 L816.8 471.9 L816.9 469.9 L816.9 468.0 L817.0 466.2 L817.1 464.6 L817.1 462.9 L817.2 461.4 L817.2 459.9 L817.3 458.5 L817.4 457.2 L817.4 455.9 L817.5 454.6 L817.6 453.4 L817.7 451.1 L817.8 449.0 L817.9 447.0 L818.0 445.1 L818.2 443.3 L818.3 441.6 L818.4 439.9 L818.5 438.4 L818.7 436.9 L818.8 435.5 L818.9 434.1 L819.0 432.8 L819.2 431.6 L819.3 430.4 L819.5 428.6 L819.7 427.0 L819.8 425.4 L820.0 424.0 L820.2 422.5 L820.4 421.2 L820.6 419.9 L820.8 418.6 L821.0 417.4 L821.2 415.8 L821.5 414.4 L821.7 413.0 L822.0 411.6 L822.2 410.3 L822.4 409.1 L822.8 407.6 L823.1 406.2 L823.4 404.8 L823.7 403.5 L824.0 402.3 L824.4 400.9 L824.7 399.5 L825.1 398.2 L825.5 397.0 L825.9 395.6 L826.3 394.3 L826.8 393.0 L827.2 391.8 L827.7 390.5 L828.2 389.2 L828.7 388.0 L829.3 386.7 L829.8 385.4 L830.4 384.1 L831.1 382.8 L831.7 381.6 L832.4 380.4 L833.0 379.2 L833.8 377.9 L834.6 376.6 L835.4 375.4 L836.3 374.1 L837.1 372.9 L838.1 371.7 L839.0 370.4 L840.1 369.2 L841.2 367.9 L842.4 366.7 L843.6 365.4 L844.9 364.2 L846.3 362.9 L847.7 361.7 L849.2 360.5 L850.8 359.3 L852.4 358.1 L854.0 357.1 L855.7 356.0 L857.3 355.0 L858.9 354.1 L860.5 353.2 L862.1 352.4 L863.7 351.6 L865.3 350.8 L866.9 350.0 L868.5 349.3 L870.1 348.7 L871.8 348.0 L873.4 347.4 L875.0 346.8 L876.6 346.2 L878.2 345.6 L879.8 345.1 L881.4 344.6 L883.0 344.1 L884.6 343.6 L886.3 343.1 L887.9 342.7 L889.5 342.3 L891.1 341.8 L892.7 341.4 L894.3 341.0 L895.9 340.7 L897.5 340.3 L899.1 339.9 L900.8 339.6 L902.4 339.2 L904.0 338.9 L905.6 338.6 L907.2 338.3 L908.8 338.0 L910.4 337.7 L912.0 337.4 L913.6 337.1 L915.2 336.9 L916.9 336.6 L918.5 336.3 L920.1 336.1 L921.7 335.8 L923.3 335.6 L924.9 335.4 L926.5 335.2 L928.1 334.9 L929.7 334.7 L931.4 334.5 L933.0 334.3 L934.6 334.1 L936.2 333.9 L937.8 333.7 L939.4 333.5 L941.0 333.4 L942.6 333.2 L944.2 333.0 L945.9 332.9 L947.5 332.7 L949.1 332.5 L950.7 332.4 L952.3 332.2 L953.9 332.1 L955.5 331.9 L957.1 331.8 L958.7 331.6 L960.3 331.5 L962.0 331.4 L963.6 331.2 L965.2 331.1 L966.8 331.0 L968.4 330.9 L970.0 330.7 L971.6 330.6 L973.2 330.5 L974.8 330.4 L976.5 330.3 L978.1 330.2 L979.7 330.1 L981.3 330.0 L982.9 329.9 L984.5 329.8 L986.1 329.7 L987.7 329.6 L989.3 329.5 L991.0 329.4 L992.6 329.3 L994.2 329.2 L995.8 329.1 L997.4 329.1 L999.0 329.0 L1000.6 328.9 L1002.2 328.8 L1003.8 328.8 L1005.4 328.7 L1007.1 328.6 L1008.7 328.5 L1010.3 328.5 L1011.9 328.4 L1013.5 328.3 L1015.1 328.3 L1016.7 328.2 L1018.3 328.1 L1019.9 328.1 L1021.6 328.0 L1023.2 328.0 L1024.8 327.9 L1026.4 327.9 L1028.0 327.8 L1029.6 327.8 L1031.2 327.7 L1032.8 327.7 L1034.4 327.6 L1036.1 327.6 L1037.7 327.5 L1039.3 327.5 L1040.9 327.4 L1042.5 327.4 L1044.1 327.3 L1045.7 327.3 L1047.3 327.3 L1048.9 327.2 L1050.5 327.2 L1052.2 327.2 L1053.8 327.1 L1055.4 327.1 L1057.0 327.1 L1058.6 327.0 L1060.2 327.0 L1061.8 327.0 L1063.4 326.9 L1065.0 326.9 L1066.7 326.9 L1068.3 326.9 L1069.9 326.8 L1071.5 326.8 L1073.1 326.8 L1074.7 326.8 L1076.3 326.7 L1077.9 326.7 L1079.5 326.7 L1081.2 326.7 L1082.8 326.7 L1084.4 326.7 L1086.0 326.6 L1087.6 326.6 L1089.2 326.6 L1090.8 326.6 L1092.4 326.6 L1094.0 326.6 L1095.6 326.6 L1097.3 326.6 L1098.9 326.5 L1100.5 326.5 L1102.1 326.5 L1103.7 326.5 L1105.3 326.5 L1106.9 326.5 L1108.5 326.5 L1110.1 326.5 L1111.8 326.5 L1112.0 326.5"/>
<path d="M605.0 328.1 L606.6 328.1 L608.2 328.1 L609.8 328.1 L611.4 328.2 L613.1 328.2 L614.7 328.2 L616.3 328.3 L617.9 328.3 L619.5 328.4 L621.1 328.5 L622.7 328.6 L624.3 328.7 L625.9 328.7 L627.6 328.8 L629.2 329.0 L630.8 329.1 L632.4 329.2 L634.0 329.3 L635.6 329.5 L637.2 329.6 L638.8 329.7 L640.4 329.9 L642.0 330.1 L643.7 330.2 L645.3 330.4 L646.9 330.6 L648.5 330.7 L650.1 330.9 L651.7 331.1 L653.3 331.3 L654.9 331.5 L656.5 331.7 L658.2 331.9 L659.8 332.2 L661.4 332.4 L663.0 332.6 L664.6 332.8 L666.2 333.1 L667.8 333.3 L669.4 333.5 L671.0 333.8 L672.7 334.0 L674.3 334.3 L675.9 334.5 L677.5 334.8 L679.1 335.0 L680.7 335.3 L682.3 335.5 L683.9 335.8 L685.5 336.1 L687.1 336.3 L688.8 336.6 L690.4 336.9 L692.0 337.1 L693.6 337.4 L695.2 337.7 L696.8 338.0 L698.4 338.3 L700.0 338.5 L701.6 338.8 L703.3 339.1 L704.9 339.4 L706.5 339.7 L708.1 340.0 L709.7 340.3 L711.3 340.5 L712.9 340.8 L714.5 341.1 L716.1 341.4 L717.8 341.7 L719.4 342.0 L721.0 342.3 L722.6 342.6 L724.2 342.9 L725.8 343.2 L727.4 343.5 L729.0 343.8 L730.6 344.1 L732.2 344.4 L733.9 344.7 L735.5 345.0 L737.1 345.3 L738.7 345.6 L740.3 345.9 L741.9 346.2 L743.5 346.5 L745.1 346.8 L746.7 347.1 L748.4 347.4 L750.0 347.6 L751.6 347.9 L753.2 348.2 L754.8 348.5 L756.4 348.8 L758.0 349.1 L759.6 349.4 L761.2 349.7 L762.9 350.0 L764.5 350.3 L766.1 350.6 L767.7 350.9 L769.3 351.2 L770.9 351.5 L772.5 351.8 L774.1 352.1 L775.7 352.4 L777.3 352.7 L779.0 353.0 L780.6 353.3 L782.2 353.6 L783.8 353.9 L785.4 354.2 L787.0 354.5 L788.6 354.8 L790.2 355.1 L791.8 355.4 L793.5 355.7 L795.1 356.0 L796.7 356.3 L798.3 356.6 L799.9 356.9 L801.5 357.2 L803.1 357.5 L804.7 357.8 L806.3 358.1 L808.0 358.4 L809.6 358.7 L811.2 359.0 L812.8 359.4 L814.4 359.7 L816.0 360.0 L817.6 360.3 L819.2 360.6 L820.8 360.9 L822.4 361.2 L824.1 361.5 L825.7 361.8 L827.3 362.1 L828.9 362.4 L830.5 362.7 L832.1 363.0 L833.7 363.3 L835.3 363.6 L836.9 363.9 L838.6 364.2 L840.2 364.5 L841.8 364.8 L843.4 365.1 L845.0 365.4 L846.6 365.7 L848.2 366.0 L849.8 366.3 L851.4 366.7 L853.1 367.0 L854.7 367.3 L856.3 367.6 L857.9 367.9 L859.5 368.2 L861.1 368.5 L862.7 368.8 L864.3 369.1 L865.9 369.5 L867.5 369.8 L869.2 370.1 L870.8 370.4 L872.4 370.7 L874.0 371.0 L875.6 371.4 L877.2 371.7 L878.8 372.0 L880.4 372.3 L882.0 372.6 L883.7 373.0 L885.3 373.3 L886.9 373.6 L888.5 373.9 L890.1 374.3 L891.7 374.6 L893.3 374.9 L894.9 375.3 L896.5 375.6 L898.2 375.9 L899.8 376.3 L901.4 376.6 L903.0 376.9 L904.6 377.3 L906.2 377.6 L907.8 378.0 L909.4 378.3 L911.0 378.7 L912.6 379.0 L914.3 379.3 L915.9 379.7 L917.5 380.0 L919.1 380.4 L920.7 380.8 L922.3 381.1 L923.9 381.5 L925.5 381.8 L927.1 382.2 L928.8 382.6 L930.4 382.9 L932.0 383.3 L933.6 383.7 L935.2 384.0 L936.8 384.4 L938.4 384.8 L940.0 385.2 L941.6 385.5 L943.3 385.9 L944.9 386.3 L946.5 386.7 L948.1 387.1 L949.7 387.5 L951.3 387.9 L952.9 388.3 L954.5 388.7 L956.1 389.1 L957.7 389.5 L959.4 389.9 L961.0 390.3 L962.6 390.8 L964.2 391.2 L965.8 391.6 L967.4 392.0 L969.0 392.5 L970.6 392.9 L972.2 393.3 L973.9 393.8 L975.5 394.2 L977.1 394.7 L978.7 395.2 L980.3 395.6 L981.9 396.1 L983.5 396.6 L985.1 397.0 L986.7 397.5 L988.4 398.0 L990.0 398.5 L991.6 399.0 L993.2 399.5 L994.8 400.0 L996.4 400.5 L998.0 401.0 L999.6 401.6 L1001.2 402.1 L1002.8 402.6 L1004.5 403.2 L1006.1 403.7 L1007.7 404.3 L1009.3 404.9 L1010.9 405.5 L1012.5 406.0 L1014.1 406.6 L1015.7 407.2 L1017.3 407.9 L1019.0 408.5 L1020.6 409.1 L1022.2 409.7 L1023.8 410.4 L1025.4 411.1 L1027.0 411.7 L1028.6 412.4 L1030.2 413.1 L1031.8 413.8 L1033.5 414.6 L1035.1 415.3 L1036.7 416.1 L1038.3 416.8 L1039.9 417.6 L1041.5 418.4 L1043.1 419.2 L1044.7 420.1 L1046.3 420.9 L1047.9 421.8 L1049.6 422.7 L1051.2 423.6 L1052.8 424.6 L1054.4 425.5 L1056.0 426.5 L1057.6 427.5 L1059.2 428.6 L1060.8 429.7 L1062.4 430.8 L1064.1 431.9 L1065.7 433.1 L1067.3 434.4 L1068.8 435.6 L1070.3 436.8 L1071.7 438.0 L1073.2 439.2 L1074.5 440.5 L1075.8 441.7 L1077.1 442.9 L1078.3 444.1 L1079.5 445.4 L1080.6 446.6 L1081.7 447.8 L1082.8 449.0 L1083.8 450.3 L1084.8 451.5 L1085.8 452.8 L1086.7 454.0 L1087.7 455.3 L1088.5 456.5 L1089.4 457.8 L1090.2 459.1 L1091.0 460.3 L1091.7 461.6 L1092.5 462.8 L1093.2 464.0 L1093.9 465.3 L1094.5 466.6 L1095.2 467.8 L1095.8 469.1 L1096.4 470.4 L1097.0 471.6 L1097.5 472.9 L1098.1 474.2 L1098.6 475.4 L1099.1 476.7 L1099.6 478.0 L1100.0 479.3 L1100.5 480.6 L1100.9 481.9 L1101.3 483.2 L1101.8 484.6 L1102.2 485.8 L1102.5 487.1 L1102.9 488.4 L1103.3 489.7 L1103.6 491.2 L1104.0 492.4 L1104.3 493.7 L1104.6 495.0 L1104.9 496.4 L1105.2 497.9 L1105.5 499.4 L1105.7 500.6 L1106.0 501.9 L1106.2 503.3 L1106.5 504.7 L1106.7 506.1 L1107.0 507.7 L1107.2 509.3 L1107.4 510.5 L1107.6 511.8 L1107.8 513.1 L1108.0 514.5 L1108.2 516.0 L1108.3 517.5 L1108.5 519.1 L1108.7 520.8 L1108.9 522.5 L1109.0 523.8 L1109.2 525.0 L1109.3 526.3 L1109.4 527.7 L1109.5 529.1 L1109.7 530.6 L1109.8 532.1 L1109.9 533.8 L1110.0 535.4 L1110.1 537.2 L1110.3 539.1 L1110.4 541.1 L1110.5 543.2 L1110.6 545.4 L1110.8 547.8 L1110.8 549.1 L1110.9 550.4 L1111.0 551.8 L1111.0 553.2 L1111.1 554.7 L1111.1 556.2 L1111.2 557.8 L1111.3 559.5 L1111.3 561.3 L1111.4 563.2 L1111.4 565.2 L1111.5 567.3 L1111.6 569.5 L1111.6 571.9 L1111.7 574.5 L1111.8 577.3 L1111.8 580.3 L1111.9 583.6 L1111.9 587.3 L1112.0 591.4"/>
<path d="M605.0 272.7 L605.7 273.9 L606.5 275.2 L607.2 276.4 L608.0 277.6 L608.7 278.8 L609.5 280.0 L610.2 281.2 L610.9 282.4 L611.7 283.6 L612.4 284.8 L613.2 286.0 L613.9 287.2 L614.7 288.4 L615.4 289.7 L616.2 290.9 L616.9 292.1 L617.6 293.3 L618.4 294.5 L619.1 295.7 L619.9 297.0 L620.6 298.2 L621.4 299.4 L622.1 300.6 L622.8 301.9 L623.6 303.1 L624.3 304.3 L625.1 305.6 L625.8 306.8 L626.6 308.0 L627.3 309.3 L628.0 310.5 L628.8 311.8 L629.5 313.0 L630.3 314.2 L631.0 315.5 L631.8 316.7 L632.5 318.0 L633.2 319.3 L634.0 320.5 L634.7 321.8 L635.5 323.0 L636.2 324.3 L637.0 325.6 L637.7 326.8 L638.5 328.1 L639.2 329.4 L639.9 330.7 L640.7 331.9 L641.4 333.2 L642.2 334.5 L642.9 335.8 L643.7 337.1 L644.4 338.4 L645.1 339.7 L645.9 341.0 L646.6 342.3 L647.4 343.6 L648.1 344.9 L648.9 346.2 L649.6 347.5 L650.3 348.8 L651.1 350.1 L651.8 351.3 L652.5 352.5 L653.1 353.7 L653.8 354.9 L654.5 356.1 L655.2 357.3 L655.9 358.5 L656.5 359.7 L657.2 360.9 L657.9 362.2 L658.6 363.4 L659.3 364.6 L660.0 365.8 L660.6 367.0 L661.3 368.2 L662.0 369.4 L662.7 370.6 L663.4 371.8 L664.0 373.1 L664.7 374.3 L665.4 375.5 L666.1 376.7 L666.8 377.9 L667.4 379.1 L668.1 380.3 L668.8 381.5 L669.5 382.7 L670.2 384.0 L670.9 385.2 L671.5 386.4 L672.2 387.6 L672.9 388.8 L673.6 390.1 L674.4 391.4 L675.1 392.7 L675.9 394.0 L676.6 395.3 L677.4 396.6 L678.1 397.9 L678.8 399.2 L679.6 400.4 L680.3 401.7 L681.1 403.0 L681.8 404.3 L682.6 405.6 L683.3 406.8 L684.0 408.1 L684.8 409.4 L685.5 410.6 L686.3 411.9 L687.0 413.1 L687.8 414.3 L688.5 415.6 L689.3 416.8 L690.0 418.0 L690.7 419.3 L691.5 420.5 L692.2 421.7 L693.0 422.9 L693.8 424.2 L694.6 425.5 L695.4 426.8 L696.2 428.0 L697.0 429.3 L697.8 430.6 L698.6 431.8 L699.4 433.1 L700.2 434.3 L701.0 435.5 L701.8 436.8 L702.6 438.0 L703.4 439.2 L704.2 440.4 L705.1 441.7 L706.0 443.0 L706.8 444.2 L707.7 445.5 L708.6 446.7 L709.4 448.0 L710.3 449.2 L711.2 450.4 L712.1 451.6 L713.0 452.9 L713.9 454.2 L714.8 455.4 L715.8 456.7 L716.7 457.9 L717.6 459.1 L718.6 460.3 L719.5 461.6 L720.5 462.8 L721.5 464.1 L722.5 465.3 L723.4 466.6 L724.4 467.8 L725.4 469.0 L726.5 470.3 L727.5 471.5 L728.6 472.7 L729.6 474.0 L730.7 475.2 L731.8 476.5 L732.9 477.7 L734.0 478.9 L735.2 480.2 L736.3 481.4 L737.5 482.6 L738.6 483.9 L739.8 485.1 L741.0 486.3 L742.2 487.6 L743.5 488.8 L744.7 490.1 L745.9 491.3 L747.2 492.5 L748.5 493.7 L749.8 495.0 L751.2 496.2 L752.6 497.5 L753.9 498.7 L755.3 499.9 L756.7 501.1 L758.1 502.3 L759.6 503.6 L761.1 504.8 L762.6 506.0 L764.2 507.3 L765.7 508.5 L767.2 509.7 L768.9 510.9 L770.5 512.1 L772.1 513.3 L773.7 514.5 L775.3 515.6 L776.9 516.8 L778.5 517.9 L780.1 519.0 L781.7 520.0 L783.4 521.1 L785.0 522.1 L786.6 523.2 L788.2 524.2 L789.8 525.2 L791.4 526.2 L793.0 527.1 L794.6 528.1 L796.2 529.0 L797.9 529.9 L799.5 530.8 L801.1 531.7 L802.7 532.6 L804.3 533.5 L805.9 534.3 L807.5 535.2 L809.1 536.0 L810.7 536.8 L812.3 537.6 L814.0 538.4 L815.6 539.2 L817.2 540.0 L818.8 540.8 L820.4 541.5 L822.0 542.3 L823.6 543.0 L825.2 543.7 L826.8 544.5 L828.5 545.2 L830.1 545.9 L831.7 546.6 L833.3 547.2 L834.9 547.9 L836.5 548.6 L838.1 549.2 L839.7 549.9 L841.3 550.5 L843.0 551.2 L844.6 551.8 L846.2 552.4 L847.8 553.0 L849.4 553.6 L851.0 554.2 L852.6 554.8 L854.2 555.4 L855.8 556.0 L857.4 556.6 L859.1 557.1 L860.7 557.7 L862.3 558.3 L863.9 558.8 L865.5 559.4 L867.1 559.9 L868.7 560.4 L870.3 561.0 L871.9 561.5 L873.6 562.0 L875.2 562.5 L876.8 563.0 L878.4 563.5 L880.0 564.0 L881.6 564.5 L883.2 565.0 L884.8 565.5 L886.4 566.0 L888.1 566.5 L889.7 566.9 L891.3 567.4 L892.8 228.2 L894.4 228.7 L896.0 229.1 L897.6 229.6 L899.2 230.0 L900.8 230.5 L902.4 230.9 L904.0 231.4 L905.6 231.8 L907.3 232.2 L908.9 232.7 L910.5 233.1 L912.1 233.5 L913.7 233.9 L915.3 234.4 L916.9 234.8 L918.5 235.2 L920.1 235.6 L921.8 236.0 L923.4 236.4 L925.0 236.8 L926.6 237.2 L928.2 237.6 L929.8 238.0 L931.4 238.3 L933.0 238.7 L934.6 239.1 L936.3 239.5 L937.9 239.9 L939.5 240.2 L941.1 240.6 L942.7 241.0 L944.3 241.4 L945.9 241.7 L947.5 242.1 L949.1 242.4 L950.7 242.8 L952.4 243.2 L954.0 243.5 L955.6 243.9 L957.2 244.2 L958.8 244.6 L960.4 244.9 L962.0 245.3 L963.6 245.6 L965.2 246.0 L966.9 246.3 L968.5 246.6 L970.1 247.0 L971.7 247.3 L973.3 247.6 L974.9 248.0 L976.5 248.3 L978.1 248.6 L979.7 249.0 L981.4 249.3 L983.0 249.6 L984.6 249.9 L986.2 250.2 L987.8 250.6 L989.4 250.9 L991.0 251.2 L992.6 251.5 L994.2 251.8 L995.8 252.1 L997.5 252.5 L999.1 252.8 L1000.7 253.1 L1002.3 253.4 L1003.9 253.7 L1005.5 254.0 L1007.1 254.3 L1008.7 254.6 L1010.3 254.9 L1012.0 255.2 L1013.6 255.5 L1015.2 255.8 L1016.8 256.1 L1018.4 256.4 L1020.0 256.7 L1021.6 257.0 L1023.2 257.3 L1024.8 257.6 L1026.5 257.9 L1028.1 258.2 L1029.7 258.5 L1031.3 258.8 L1032.9 259.0 L1034.5 259.3 L1036.1 259.6 L1037.7 259.9 L1039.3 260.2 L1040.9 260.5 L1042.6 260.8 L1044.2 261.0 L1045.8 261.3 L1047.4 261.6 L1049.0 261.9 L1050.6 262.2 L1052.2 262.5 L1053.8 262.7 L1055.4 263.0 L1057.1 263.3 L1058.7 263.6 L1060.3 263.9 L1061.9 264.1 L1063.5 264.4 L1065.1 264.7 L1066.7 265.0 L1068.3 265.3 L1069.9 265.5 L1071.6 265.8 L1073.2 266.1 L1074.8 266.4 L1076.4 266.6 L1078.0 266.9 L1079.6 267.2 L1081.2 267.5 L1082.8 267.7 L1084.4 268.0 L1086.0 268.3 L1087.7 268.5 L1089.3 268.8 L1090.9 269.1 L1092.5 269.4 L1094.1 269.6 L1095.7 269.9 L1097.3 270.2 L1098.9 270.5 L1100.5 270.7 L1102.2 271.0 L1103.8 271.3 L1105.4 271.5 L1107.0 271.8 L1108.6 272.1 L1110.2 272.4 L1111.8 272.6 L1112.0 272.7" stroke-dasharray="8 4"/>
<path d="M605.0 272.7 L606.6 273.7 L608.2 274.7 L609.8 275.7 L611.4 276.7 L613.1 277.8 L614.7 278.8 L616.3 279.8 L617.9 280.9 L619.5 281.9 L621.1 283.0 L622.7 284.1 L624.3 285.2 L625.9 286.3 L627.6 287.4 L629.2 288.6 L630.8 289.8 L632.4 291.0 L633.9 292.2 L635.5 293.4 L637.0 294.6 L638.5 295.9 L639.9 297.1 L641.2 298.3 L642.6 299.6 L643.9 300.8 L645.2 302.1 L646.4 303.3 L647.6 304.5 L648.8 305.8 L649.9 307.0 L651.0 308.2 L652.1 309.4 L653.1 310.7 L654.1 311.9 L655.1 313.1 L656.1 314.4 L657.0 315.7 L658.0 316.9 L658.8 318.1 L659.7 319.4 L660.6 320.7 L661.4 321.9 L662.2 323.2 L663.0 324.5 L663.7 325.7 L664.5 326.9 L665.2 328.2 L665.9 329.4 L666.6 330.7 L667.3 331.9 L667.9 333.2 L668.6 334.4 L669.2 335.6 L669.8 336.9 L670.4 338.2 L671.0 339.5 L671.6 340.7 L672.2 341.9 L672.7 343.2 L673.3 344.5 L673.8 345.8 L674.4 347.1 L674.9 348.3 L675.4 349.6 L675.9 350.8 L676.4 352.1 L676.9 353.4 L677.4 354.7 L677.9 356.1 L678.3 357.5 L678.8 358.7 L679.2 359.9 L679.7 361.2 L680.1 362.4 L680.5 363.7 L681.0 365.1 L681.4 366.4 L681.8 367.7 L682.3 369.1 L682.7 370.5 L683.1 371.7 L683.4 372.9 L683.8 374.2 L684.2 375.4 L684.5 376.7 L684.9 378.0 L685.3 379.3 L685.7 380.6 L686.0 381.9 L686.4 383.2 L686.8 384.6 L687.1 386.0 L687.5 387.3 L687.9 388.7 L688.3 390.1 L688.6 391.5 L689.0 393.0 L689.3 394.2 L689.6 395.4 L689.9 396.6 L690.2 397.8 L690.6 399.1 L690.9 400.3 L691.2 401.5 L691.5 402.8 L691.8 404.1 L692.1 405.3 L692.4 406.6 L692.7 407.9 L693.0 409.2 L693.3 410.5 L693.7 411.7 L694.0 413.0 L694.3 414.3 L694.6 415.7 L694.9 417.0 L695.2 418.3 L695.5 419.6 L695.8 420.9 L696.1 422.2 L696.4 423.6 L696.7 424.9 L697.1 426.2 L697.4 427.5 L697.7 428.9 L698.0 430.2 L698.3 431.5 L698.6 432.9 L698.9 434.2 L699.2 435.5 L699.5 436.8 L699.8 438.1 L700.2 439.5 L700.5 440.8 L700.8 442.1 L701.1 443.4 L701.4 444.7 L701.7 446.0 L702.0 447.3 L702.3 448.6 L702.6 449.9 L702.9 451.2 L703.3 452.4 L703.6 453.7 L703.9 455.0 L704.2 456.2 L704.5 457.5 L704.8 458.7 L705.1 459.9 L705.4 461.2 L705.7 462.4 L706.0 463.6 L706.4 464.8 L706.7 466.2 L707.1 467.6 L707.5 469.0 L707.8 470.4 L708.2 471.8 L708.6 473.2 L709.0 474.5 L709.3 475.9 L709.7 477.2 L710.1 478.5 L710.4 479.8 L710.8 481.1 L711.2 482.3 L711.6 483.6 L711.9 484.8 L712.3 486.0 L712.7 487.3 L713.1 488.6 L713.5 490.0 L714.0 491.4 L714.4 492.7 L714.8 494.0 L715.3 495.3 L715.7 496.6 L716.1 497.8 L716.6 499.1 L717.0 500.3 L717.5 501.6 L718.0 503.0 L718.5 504.3 L719.0 505.6 L719.5 506.9 L720.0 508.1 L720.5 509.3 L721.0 510.7 L721.6 512.0 L722.1 513.3 L722.7 514.5 L723.3 515.8 L723.8 517.0 L724.4 518.3 L725.1 519.6 L725.7 520.9 L726.3 522.1 L726.9 523.3 L727.6 524.6 L728.3 525.9 L729.0 527.1 L729.7 528.4 L730.5 529.7 L731.2 530.9 L731.9 532.1 L732.7 533.4 L733.5 534.6 L734.4 535.9 L735.3 537.1 L736.1 538.4 L737.1 539.6 L738.0 540.8 L739.0 542.1 L740.0 543.3 L741.0 544.6 L742.1 545.8 L743.2 547.0 L744.4 548.3 L745.6 549.5 L746.8 550.7 L748.1 552.0 L749.4 553.2 L750.8 554.4 L752.2 555.6 L753.7 556.8 L755.2 558.0 L756.8 559.3 L758.5 560.4 L760.1 561.5 L761.7 562.6 L763.3 563.6 L764.9 564.6 L766.5 565.6 L768.1 566.5 L769.7 567.4 L771.3 568.2 L772.9 569.0 L774.6 569.8 L776.2 570.6 L777.8 571.3 L779.4 572.1 L781.0 572.8 L782.6 573.4 L784.2 574.1 L785.8 574.7 L787.4 575.3 L789.1 575.9 L790.7 576.5 L792.3 577.1 L793.9 577.6 L795.5 578.2 L797.1 578.7 L798.7 579.2 L800.3 579.7 L801.9 580.2 L803.6 580.6 L805.2 581.1 L806.8 581.5 L808.4 582.0 L810.0 582.4 L811.6 582.8 L813.2 583.2 L814.8 583.6 L815.8 244.2 L817.4 244.6 L819.0 245.0 L820.7 245.4 L822.3 245.7 L823.9 246.1 L825.5 246.4 L827.1 246.8 L828.7 247.1 L830.3 247.4 L831.9 247.8 L833.5 248.1 L835.1 248.4 L836.8 248.7 L838.4 249.0 L840.0 249.3 L841.6 249.6 L843.2 249.8 L844.8 250.1 L846.4 250.4 L848.0 250.7 L849.6 250.9 L851.3 251.2 L852.9 251.4 L854.5 251.7 L856.1 251.9 L857.7 252.2 L859.3 252.4 L860.9 252.7 L862.5 252.9 L864.1 253.1 L865.8 253.3 L867.4 253.6 L869.0 253.8 L870.6 254.0 L872.2 254.2 L873.8 254.4 L875.4 254.6 L877.0 254.8 L878.6 255.0 L880.2 255.2 L881.9 255.4 L883.5 255.6 L885.1 255.8 L886.7 256.0 L888.3 256.2 L889.9 256.4 L891.5 256.6 L893.1 256.8 L894.7 256.9 L896.4 257.1 L898.0 257.3 L899.6 257.5 L901.2 257.7 L902.8 257.8 L904.4 258.0 L906.0 258.2 L907.6 258.3 L909.2 258.5 L910.9 258.6 L912.5 258.8 L914.1 259.0 L915.7 259.1 L917.3 259.3 L918.9 259.4 L920.5 259.6 L922.1 259.7 L923.7 259.9 L925.3 260.0 L927.0 260.2 L928.6 260.3 L930.2 260.5 L931.8 260.6 L933.4 260.8 L935.0 260.9 L936.6 261.0 L938.2 261.2 L939.8 261.3 L941.5 261.5 L943.1 261.6 L944.7 261.7 L946.3 261.9 L947.9 262.0 L949.5 262.1 L951.1 262.3 L952.7 262.4 L954.3 262.5 L956.0 262.7 L957.6 262.8 L959.2 262.9 L960.8 263.0 L962.4 263.2 L964.0 263.3 L965.6 263.4 L967.2 263.5 L968.8 263.6 L970.4 263.8 L972.1 263.9 L973.7 264.0 L975.3 264.1 L976.9 264.2 L978.5 264.4 L980.1 264.5 L981.7 264.6 L983.3 264.7 L984.9 264.8 L986.6 264.9 L988.2 265.1 L989.8 265.2 L991.4 265.3 L993.0 265.4 L994.6 265.5 L996.2 265.6 L997.8 265.7 L999.4 265.8 L1001.1 265.9 L1002.7 266.0 L1004.3 266.2 L1005.9 266.3 L1007.5 266.4 L1009.1 266.5 L1010.7 266.6 L1012.3 266.7 L1013.9 266.8 L1015.5 266.9 L1017.2 267.0 L1018.8 267.1 L1020.4 267.2 L1022.0 267.3 L1023.6 267.4 L1025.2 267.5 L1026.8 267.6 L1028.4 267.7 L1030.0 267.8 L1031.7 267.9 L1033.3 268.0 L1034.9 268.1 L1036.5 268.2 L1038.1 268.3 L1039.7 268.4 L1041.3 268.5 L1042.9 268.6 L1044.5 268.7 L1046.2 268.8 L1047.8 268.9 L1049.4 269.0 L1051.0 269.1 L1052.6 269.2 L1054.2 269.3 L1055.8 269.4 L1057.4 269.5 L1059.0 269.6 L1060.6 269.7 L1062.3 269.8 L1063.9 269.9 L1065.5 270.0 L1067.1 270.1 L1068.7 270.2 L1070.3 270.3 L1071.9 270.4 L1073.5 270.5 L1075.1 270.6 L1076.8 270.7 L1078.4 270.8 L1080.0 270.8 L1081.6 270.9 L1083.2 271.0 L1084.8 271.1 L1086.4 271.2 L1088.0 271.3 L1089.6 271.4 L1091.3 271.5 L1092.9 271.6 L1094.5 271.7 L1096.1 271.8 L1097.7 271.9 L1099.3 272.0 L1100.9 272.1 L1102.5 272.2 L1104.1 272.3 L1105.7 272.3 L1107.4 272.4 L1109.0 272.5 L1110.6 272.6 L1112.0 272.7" stroke-dasharray="8 4"/>
<path d="M605.0 272.7 L606.2 274.0 L607.5 275.2 L608.7 276.5 L610.0 277.7 L611.2 278.9 L612.4 280.2 L613.7 281.4 L614.9 282.7 L616.2 283.9 L617.4 285.1 L618.6 286.3 L619.9 287.6 L621.1 288.8 L622.3 290.0 L623.6 291.2 L624.8 292.4 L626.1 293.6 L627.4 294.9 L628.7 296.1 L630.0 297.4 L631.3 298.6 L632.6 299.9 L633.9 301.1 L635.2 302.3 L636.5 303.5 L637.8 304.7 L639.1 305.9 L640.4 307.2 L641.8 308.4 L643.2 309.7 L644.5 310.9 L645.9 312.1 L647.3 313.3 L648.7 314.6 L650.1 315.8 L651.5 317.1 L652.9 318.3 L654.4 319.5 L655.8 320.7 L657.3 321.9 L658.8 323.2 L660.3 324.4 L661.7 325.6 L663.3 326.8 L664.8 328.0 L666.4 329.3 L667.9 330.5 L669.6 331.7 L671.2 332.9 L672.8 334.1 L674.4 335.3 L676.0 336.5 L677.6 337.7 L679.2 338.8 L680.8 339.9 L682.4 341.1 L684.0 342.2 L685.7 343.3 L687.3 344.3 L688.9 345.4 L690.5 346.5 L692.1 347.5 L693.7 348.5 L695.3 349.5 L696.9 350.5 L698.5 351.5 L700.2 352.5 L701.8 353.5 L703.4 354.4 L705.0 355.3 L706.6 356.3 L708.2 357.2 L709.8 358.1 L711.4 358.9 L713.0 359.8 L714.7 360.7 L716.3 361.5 L717.9 362.4 L719.5 363.2 L721.1 364.0 L722.7 364.8 L724.3 365.6 L725.9 366.4 L727.5 367.2 L729.1 368.0 L730.8 368.7 L732.4 369.5 L734.0 370.2 L735.6 370.9 L737.2 371.6 L738.8 372.4 L740.4 373.1 L742.0 373.7 L743.6 374.4 L745.3 375.1 L746.9 375.8 L748.5 376.4 L750.1 377.1 L751.7 377.7 L753.3 378.3 L754.9 379.0 L756.5 379.6 L758.1 380.2 L759.8 380.8 L761.4 381.4 L763.0 382.0 L764.6 382.6 L766.2 383.1 L767.8 383.7 L769.4 384.3 L771.0 384.8 L772.6 385.4 L774.2 385.9 L775.9 386.5 L777.5 387.0 L779.1 387.5 L780.7 388.0 L782.3 388.5 L783.9 389.0 L785.5 389.5 L787.1 390.0 L788.7 390.5 L790.4 391.0 L792.0 391.5 L793.6 392.0 L795.2 392.4 L796.8 392.9 L798.4 393.4 L800.0 393.8 L801.6 394.3 L803.2 394.7 L804.9 395.2 L806.5 395.6 L808.1 396.0 L809.7 396.4 L811.3 396.9 L812.9 397.3 L814.5 397.7 L816.1 398.1 L817.7 398.5 L819.3 398.9 L821.0 399.3 L822.6 399.7 L824.2 400.1 L825.8 400.5 L827.4 400.9 L829.0 401.3 L830.6 401.6 L832.2 402.0 L833.8 402.4 L835.5 402.8 L837.1 403.1 L838.7 403.5 L840.3 403.8 L841.9 404.2 L843.5 404.5 L845.1 404.9 L846.7 405.2 L848.3 405.6 L850.0 405.9 L851.6 406.3 L853.2 406.6 L854.8 406.9 L856.4 407.2 L858.0 407.6 L859.6 407.9 L861.2 408.2 L862.8 408.5 L864.4 408.9 L866.1 409.2 L867.7 409.5 L869.3 409.8 L870.9 410.1 L872.5 410.4 L874.1 410.7 L875.7 411.0 L877.3 411.3 L878.9 411.6 L880.6 411.9 L882.2 412.2 L883.8 412.5 L885.4 412.8 L887.0 413.0 L888.6 413.3 L890.2 413.6 L891.8 413.9 L893.4 414.2 L895.1 414.4 L896.7 414.7 L898.3 415.0 L899.9 415.3 L901.5 415.5 L903.1 415.8 L904.7 416.1 L906.3 416.3 L907.9 416.6 L909.5 416.8 L911.2 417.1 L912.8 417.4 L914.4 417.6 L916.0 417.9 L917.6 418.1 L919.2 418.4 L920.8 418.6 L922.4 418.9 L924.0 419.1 L925.7 419.4 L927.3 419.6 L928.9 419.8 L930.5 420.1 L932.1 420.3 L933.7 420.6 L935.3 420.8 L936.9 421.0 L938.5 421.3 L940.2 421.5 L941.8 421.7 L943.4 422.0 L945.0 422.2 L946.6 422.4 L948.2 422.7 L949.8 422.9 L951.4 423.1 L953.0 423.3 L954.6 423.6 L956.3 423.8 L957.9 424.0 L959.5 424.2 L961.1 424.5 L962.7 424.7 L964.3 424.9 L965.9 425.1 L967.5 425.3 L969.1 425.5 L970.8 425.8 L972.4 426.0 L974.0 426.2 L975.6 426.4 L977.2 426.6 L978.8 426.8 L980.4 427.0 L982.0 427.2 L983.6 427.4 L985.3 427.6 L986.9 427.9 L988.5 428.1 L990.1 428.3 L991.7 428.5 L993.3 428.7 L994.9 428.9 L996.5 429.1 L998.1 429.3 L999.7 429.5 L1001.4 429.7 L1003.0 429.9 L1004.6 430.1 L1006.2 430.3 L1007.8 430.5 L1009.4 430.7 L1011.0 430.9 L1012.6 431.1 L1014.2 431.3 L1015.9 431.5 L1017.5 431.7 L1019.1 431.8 L1020.7 432.0 L1022.3 432.2 L1023.9 432.4 L1025.5 432.6 L1027.1 432.8 L1028.7 433.0 L1030.4 433.2 L1032.0 433.4 L1033.6 433.6 L1035.2 433.8 L1036.8 434.0 L1038.4 434.1 L1040.0 434.3 L1041.6 434.5 L1043.2 434.7 L1044.8 434.9 L1046.5 435.1 L1048.1 435.3 L1049.7 435.4 L1051.3 435.6 L1052.9 435.8 L1054.5 436.0 L1056.1 436.2 L1057.7 436.4 L1059.3 436.6 L1061.0 436.7 L1062.6 436.9 L1064.2 437.1 L1065.8 437.3 L1067.4 437.5 L1069.0 437.7 L1070.6 437.8 L1072.2 438.0 L1073.8 438.2 L1075.5 438.4 L1077.1 438.6 L1078.7 438.8 L1080.3 438.9 L1081.9 439.1 L1083.5 439.3 L1085.1 439.5 L1086.7 439.7 L1088.3 439.8 L1089.9 440.0 L1091.6 440.2 L1093.2 440.4 L1094.8 440.6 L1096.4 440.7 L1098.0 440.9 L1099.6 441.1 L1101.2 441.3 L1102.8 441.5 L1104.4 441.6 L1106.1 441.8 L1107.7 442.0 L1109.3 442.2 L1110.9 442.4 L1112.0 442.5" stroke-dasharray="8 4"/>
</g>
<g font-family='"Liberation Sans", sans-serif' font-size="13.33" letter-spacing="-0.42" fill="#303030">
<text x="605.3" y="618" text-anchor="middle">0</text>
<text x="706.8" y="618" text-anchor="middle">100</text>
<text x="808.3" y="618" text-anchor="middle">200</text>
<text x="909.8" y="618" text-anchor="middle">300</text>
<text x="1011.3" y="618" text-anchor="middle">400</text>
<text x="599.8" y="593.7" text-anchor="end">-80</text>
<text x="599.8" y="553.7" text-anchor="end">-70</text>
<text x="599.8" y="513.7" text-anchor="end">-60</text>
<text x="599.8" y="473.7" text-anchor="end">-50</text>
<text x="599.8" y="433.7" text-anchor="end">-40</text>
<text x="599.8" y="393.7" text-anchor="end">-30</text>
<text x="599.8" y="353.7" text-anchor="end">-20</text>
<text x="599.8" y="313.7" text-anchor="end">-10</text>
<text x="599.8" y="273.7" text-anchor="end">0</text>
<text x="599.8" y="233.7" text-anchor="end">10</text>
<text x="1119.6" y="232.4">0.4</text>
<text x="1119.6" y="275.6">0</text>
<text x="1119.6" y="318.9">-0.4</text>
<text x="1119.6" y="362.1">-0.8</text>
<text x="1119.6" y="405.4">-1.2</text>
<text x="1119.6" y="448.6">-1.6</text>
<text x="1119.6" y="491.8">-2</text>
<text x="1119.6" y="535.1">-2.4</text>
<text x="1119.6" y="578.3">-2.8</text>
</g>
<g font-family='"Liberation Sans", sans-serif' font-size="14.67" fill="#303030">
<text x="858.5" y="204.8" text-anchor="middle" textLength="300.3">Magnitude Response (dB) / Phase Response</text>
<text x="858.7" y="637" text-anchor="middle" textLength="102.6">Frequency (Hz)</text>
<text transform="translate(570.4,405) rotate(-90)" text-anchor="middle" textLength="103.2">Magnitude (dB)</text>
<text transform="translate(1147.2,405.5) rotate(90)" text-anchor="middle" textLength="106.5">Phase (radians)</text>
</g>
<path d="M552 185.5 H1177" stroke="#262626" stroke-width="1"/>
<g font-family='"Liberation Sans", sans-serif' font-size="13" fill="#303030">
<path d="M557 155.5 h30" stroke="#1171BE" stroke-width="1"/>
<text x="589.5" y="158.7" textLength="139.3">d: Section #1 Magnitude</text>
<path d="M744.5 155.5 h30" stroke="#1171BE" stroke-width="1"/>
<text x="777.0" y="158.7" textLength="139.3">d: Section #2 Magnitude</text>
<path d="M931.75 155.5 h30" stroke="#1171BE" stroke-width="1"/>
<text x="964.25" y="158.7" textLength="139.3">d: Section #3 Magnitude</text>
<path d="M562 173.5 h30" stroke="#1171BE" stroke-width="1" stroke-dasharray="8 4"/>
<text x="594.5" y="176.8" textLength="115.3">d: Section #1 Phase</text>
<path d="M725.25 173.5 h30" stroke="#1171BE" stroke-width="1" stroke-dasharray="8 4"/>
<text x="757.75" y="176.8" textLength="115.3">d: Section #2 Phase</text>
<path d="M889 173.5 h30" stroke="#1171BE" stroke-width="1" stroke-dasharray="8 4"/>
<text x="921.5" y="176.8" textLength="115.3">d: Section #3 Phase</text>
</g>
</svg>
</body></html>
